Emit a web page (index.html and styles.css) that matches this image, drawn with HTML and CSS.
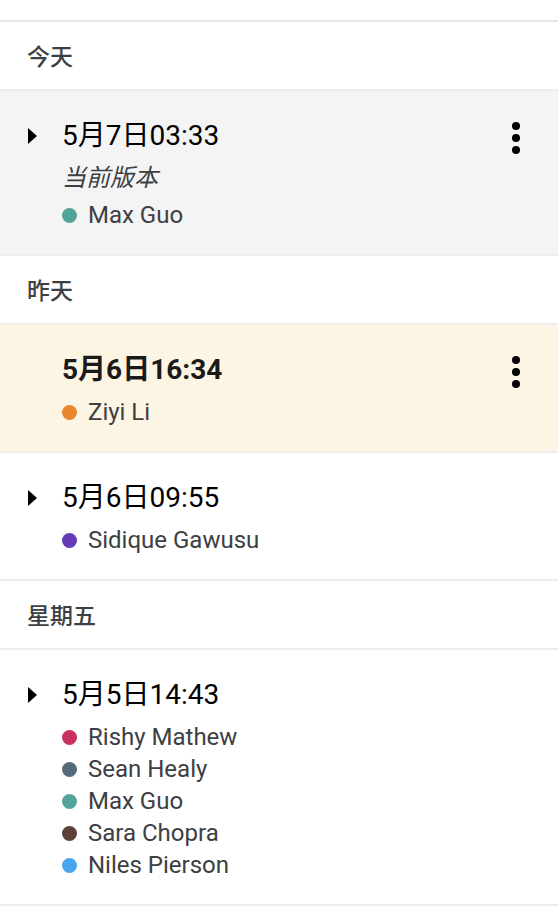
FILE: index.html
```html
<!DOCTYPE html>
<html lang="zh">
<head>
<meta charset="utf-8">
<title>版本历史</title>
<link rel="stylesheet" href="styles.css">
</head>
<body>
<div class="history">
  <div class="top-spacer"></div>

  <div class="group-header">今天</div>
  <div class="version current">
    <div class="toggle"><span class="caret"></span></div>
    <div class="info">
      <div class="title">5月7日03:33</div>
      <div class="subtitle">当前版本</div>
      <ul class="authors">
        <li><span class="dot c-teal"></span>Max Guo</li>
      </ul>
    </div>
    <div class="menu"><span></span><span></span><span></span></div>
  </div>

  <div class="group-header">昨天</div>
  <div class="version selected">
    <div class="toggle"></div>
    <div class="info">
      <div class="title bold">5月6日16:34</div>
      <ul class="authors">
        <li><span class="dot c-orange"></span>Ziyi Li</li>
      </ul>
    </div>
    <div class="menu"><span></span><span></span><span></span></div>
  </div>
  <div class="version">
    <div class="toggle"><span class="caret"></span></div>
    <div class="info">
      <div class="title">5月6日09:55</div>
      <ul class="authors">
        <li><span class="dot c-purple"></span>Sidique Gawusu</li>
      </ul>
    </div>
  </div>

  <div class="group-header">星期五</div>
  <div class="version">
    <div class="toggle"><span class="caret"></span></div>
    <div class="info">
      <div class="title">5月5日14:43</div>
      <ul class="authors">
        <li><span class="dot c-pink"></span>Rishy Mathew</li>
        <li><span class="dot c-slate"></span>Sean Healy</li>
        <li><span class="dot c-teal"></span>Max Guo</li>
        <li><span class="dot c-brown"></span>Sara Chopra</li>
        <li><span class="dot c-blue"></span>Niles Pierson</li>
      </ul>
    </div>
  </div>
</div>
</body>
</html>
```

FILE: styles.css
```css
* { box-sizing: border-box; }

html, body {
  margin: 0;
  padding: 0;
  background: #ffffff;
}

body {
  font-family: Roboto, "Noto Sans CJK SC", "Noto Sans", sans-serif;
  color: #3c4043;
}

.history {
  display: flex;
  flex-direction: column;
}

.top-spacer {
  height: 22px;
  border-bottom: 2px solid #e6e6e6;
}

.group-header {
  height: 69px;
  padding-top: 4px;
  line-height: 63px;
  padding-left: 27px;
  font-size: 23px;
  font-weight: 500;
  color: #3c4043;
  border-bottom: 2px solid #ececec;
}

.version {
  display: flex;
  align-items: flex-start;
  padding: 27px 38px 23px 28px;
  border-bottom: 2px solid #ececec;
  background: #ffffff;
}

.version.current { background: #f4f4f4; }
.version.selected { background: #fdf5e3; }

.toggle {
  width: 34px;
  height: 36px;
  flex: none;
  display: flex;
  align-items: center;
}

.caret {
  width: 0;
  height: 0;
  border-top: 8px solid transparent;
  border-bottom: 8px solid transparent;
  border-left: 9px solid #000;
}

.info {
  flex: 1;
  min-width: 0;
}

.title {
  font-size: 28px;
  line-height: 36px;
  color: #000;
  margin-bottom: 8px;
}

.title.bold {
  font-weight: 700;
  color: #1a1a1a;
}

.subtitle {
  font-size: 24px;
  line-height: 32px;
  font-style: italic;
  color: #3c4043;
  margin-top: 4px;
  margin-bottom: 5px;
}

.authors {
  list-style: none;
  margin: 0;
  padding: 0;
}

.authors li {
  display: flex;
  align-items: center;
  height: 32px;
  font-size: 24px;
  color: #3c4043;
}

.dot {
  width: 15px;
  height: 15px;
  border-radius: 50%;
  flex: none;
  margin-right: 11px;
}

.c-teal { background: #52a499; }
.c-orange { background: #e8852f; }
.c-purple { background: #673ab7; }
.c-pink { background: #c9325e; }
.c-slate { background: #566b79; }
.c-brown { background: #5d4037; }
.c-blue { background: #48a4ee; }

.menu {
  flex: none;
  height: 36px;
  width: 8px;
  margin-top: 2px;
  display: flex;
  flex-direction: column;
  justify-content: center;
  gap: 4px;
}

.menu span {
  width: 8px;
  height: 8px;
  border-radius: 50%;
  background: #000;
}
```
